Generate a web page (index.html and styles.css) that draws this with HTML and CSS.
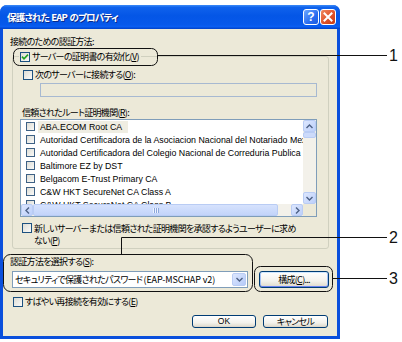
FILE: index.html
```html
<!DOCTYPE html>
<html lang="ja">
<head>
<meta charset="utf-8">
<title>保護された EAP のプロパティ</title>
<link rel="stylesheet" href="styles.css">
</head>
<body>
<div class="stage">
  <div class="window">
    <div class="titlebar">
      <span class="title">保護された EAP のプロパティ</span>
      <span class="tbtn help">?</span>
      <span class="tbtn close"><svg width="10" height="10" viewBox="0 0 10 10"><path d="M1.5 1.5 L8.5 8.5 M8.5 1.5 L1.5 8.5" stroke="#fff" stroke-width="2" stroke-linecap="square"/></svg></span>
    </div>
    <div class="client">
      <div class="label first">接続のための認証方法:</div>
      <fieldset class="group">
        <legend class="row"><span class="cb"><svg width="8" height="8" viewBox="0 0 8 8"><path d="M1 3.6 L3 5.8 L7 1.6" fill="none" stroke="#21A121" stroke-width="1.6"/></svg></span><span>サーバーの証明書の有効化(<u>V</u>)</span></legend>
        <div class="row srv"><span class="cb"></span><span>次のサーバーに接続する(<u>O</u>):</span></div>
        <div class="textbox"></div>
        <div class="label inner">信頼されたルート証明機関(<u>R</u>):</div>
        <div class="listbox">
          <div class="lb-main">
            <div class="items">
              <div class="item"><span class="cb small"></span><span class="itxt sel">ABA.ECOM Root CA</span></div>
              <div class="item"><span class="cb small"></span><span class="itxt">Autoridad Certificadora de la Asociacion Nacional del Notariado Mexicano</span></div>
              <div class="item"><span class="cb small"></span><span class="itxt">Autoridad Certificadora del Colegio Nacional de Correduria Publica</span></div>
              <div class="item"><span class="cb small"></span><span class="itxt">Baltimore EZ by DST</span></div>
              <div class="item"><span class="cb small"></span><span class="itxt">Belgacom E-Trust Primary CA</span></div>
              <div class="item"><span class="cb small"></span><span class="itxt">C&amp;W HKT SecureNet CA Class A</span></div>
              <div class="item"><span class="cb small"></span><span class="itxt">C&amp;W HKT SecureNet CA Class B</span></div>
            </div>
            <div class="vscroll">
              <div class="sbtn"><svg width="7" height="5" viewBox="0 0 7 5"><path d="M0.5 4 L3.5 1 L6.5 4" fill="none" stroke="#4D6185" stroke-width="1.4"/></svg></div>
              <div class="vthumb"></div>
              <div class="vtrack"></div>
              <div class="sbtn"><svg width="7" height="5" viewBox="0 0 7 5"><path d="M0.5 1 L3.5 4 L6.5 1" fill="none" stroke="#4D6185" stroke-width="1.4"/></svg></div>
            </div>
          </div>
          <div class="hrow">
            <div class="sbtn"><svg width="5" height="7" viewBox="0 0 5 7"><path d="M4 0.5 L1 3.5 L4 6.5" fill="none" stroke="#4D6185" stroke-width="1.4"/></svg></div>
            <div class="hthumb"><span class="grip"></span></div>
            <div class="htrack"></div>
            <div class="sbtn"><svg width="5" height="7" viewBox="0 0 5 7"><path d="M1 0.5 L4 3.5 L1 6.5" fill="none" stroke="#4D6185" stroke-width="1.4"/></svg></div>
            <div class="corner"></div>
          </div>
        </div>
        <div class="row wrap"><span class="cb"></span><span class="wraptext">新しいサーバーまたは信頼された証明機関を承認するようユーザーに求め<br>ない(<u>P</u>)</span></div>
      </fieldset>
      <div class="label method">認証方法を選択する(<u>S</u>):</div>
      <div class="method-row">
        <div class="combo">
          <span class="combo-text">セキュリティで保護されたパスワード <span class="latin">(EAP-MSCHAP v2)</span></span>
          <span class="dd"><svg width="7" height="5" viewBox="0 0 7 5"><path d="M0.5 1 L3.5 4 L6.5 1" fill="none" stroke="#4D6185" stroke-width="1.4"/></svg></span>
        </div>
        <button class="btn cfg">構成(<u>C</u>)...</button>
      </div>
      <div class="row fast"><span class="cb"></span><span>すばやい再接続を有効にする(<u>E</u>)</span></div>
      <div class="buttons">
        <button class="btn ok">OK</button>
        <button class="btn cancel">キャンセル</button>
      </div>
    </div>
  </div>
  <svg class="callouts" width="402" height="342" viewBox="0 0 402 342">
    <g fill="none" stroke="#111" stroke-width="1">
      <rect x="13.5" y="48.5" width="144" height="17" rx="6"/>
      <line x1="157.5" y1="55.5" x2="387" y2="55.5"/>
      <rect x="3.5" y="254.5" width="249" height="37" rx="7"/>
      <polyline points="121.5,254.5 121.5,237.5 387,237.5"/>
      <rect x="254.5" y="266.5" width="78" height="25" rx="6"/>
      <line x1="332.5" y1="278.5" x2="387" y2="278.5"/>
    </g>
    <g class="num">
      <text x="389" y="61">1</text>
      <text x="389" y="243">2</text>
      <text x="389" y="284">3</text>
    </g>
  </svg>
</div>
</body>
</html>
```

FILE: styles.css
```css
* { box-sizing: border-box; }
html, body { margin: 0; padding: 0; background: #fff; }
body {
  font-family: "Noto Sans CJK JP", "Liberation Sans", sans-serif;
  font-size: 9px;
  font-feature-settings: "palt";
  letter-spacing: -0.7px;
  color: #000;
}
u { text-decoration: underline; text-underline-offset: 1px; }

.stage { position: relative; width: 402px; height: 342px; padding-top: 5px; overflow: hidden; }

.window {
  width: 340px;
  height: 334px;
  display: flex;
  flex-direction: column;
  background: #0A4FDC;
  border-radius: 7px 7px 0 0;
}
.titlebar {
  height: 24px;
  display: flex;
  align-items: center;
  padding: 0 4px 0 7px;
  border-radius: 7px 7px 0 0;
  background: linear-gradient(#3C8BF7 0%, #0F62EC 10%, #0456E6 45%, #0658EA 80%, #0A5EF2 90%, #0040C8 100%);
}
.title {
  flex: 1;
  color: #fff;
  font-weight: bold;
  font-size: 9.5px;
  letter-spacing: -0.8px;
  word-spacing: 1px;
  text-shadow: 1px 1px 0 #0A2A8A;
}
.tbtn {
  width: 16px;
  height: 16px;
  margin-left: 1px;
  border: 1px solid #fff;
  border-radius: 3px;
  display: flex;
  align-items: center;
  justify-content: center;
}
.help {
  background: linear-gradient(135deg, #6EA8FF, #2A6DF0 60%, #1D5BE0);
  color: #fff;
  font: bold 12px "Liberation Sans", sans-serif;
  letter-spacing: 0;
}
.close { background: linear-gradient(135deg, #F08A62, #E0532A 55%, #C83A12); }

.client {
  flex: 1;
  margin: 0 3px 3px;
  background: #ECE9D8;
  display: flex;
  flex-direction: column;
  align-items: flex-start;
}
.label { line-height: 11px; height: 11px; white-space: nowrap; }
.label.first { margin: 7px 0 0 7px; }

.row { display: flex; align-items: center; gap: 2px; line-height: 11px; white-space: nowrap; }

.cb {
  flex: none;
  width: 10px;
  height: 10px;
  border: 1px solid #1C5180;
  background: linear-gradient(135deg, #DCDCD5, #FAFAF8);
  display: flex;
  align-items: center;
  justify-content: center;
}
.cb.small { width: 9px; height: 9px; border-color: #3E6185; }

.group {
  align-self: stretch;
  margin: 4px 8px 0 9px;
  padding: 0 11px 1px 6px;
  border: 1px solid #D0D0BF;
  border-radius: 3px;
  min-width: 0;
}
.group legend { padding: 0 2px 0 1px; height: 11px; }

.row.srv { margin: 7px 0 0 4px; }
.textbox {
  margin: 3px 0 0 21px;
  height: 14px;
  border: 1px solid #A7B9D1;
  background: #ECE9D8;
}
.label.inner { margin: 10px 0 0 3px; }

.listbox {
  margin-top: 1px;
  margin-left: 1px;
  height: 98px;
  border: 1px solid #7F9DB9;
  background: #fff;
  display: flex;
  flex-direction: column;
}
.lb-main { flex: 1; display: flex; min-height: 0; }
.items {
  flex: 1;
  overflow: hidden;
  font-family: "Liberation Sans", sans-serif;
  font-size: 8.8px;
  letter-spacing: 0;
  font-feature-settings: normal;
}
.item { height: 13px; display: flex; align-items: center; white-space: nowrap; padding-left: 5px; }
.itxt { margin-left: 3px; padding: 0 2px; line-height: 12px; }
.itxt.sel { background: #EFEDE2; padding-right: 6px; }

.vscroll { width: 13px; display: flex; flex-direction: column; background: #F3F1EA; }
.sbtn {
  flex: none;
  width: 13px;
  height: 12px;
  border: 1px solid #B9CCF4;
  border-radius: 2px;
  background: linear-gradient(135deg, #DDE7FE, #BCCFFA);
  display: flex;
  align-items: center;
  justify-content: center;
}
.vthumb { height: 6px; border: 1px solid #B9CCF4; border-radius: 2px; background: #CCDAFA; }
.vtrack { flex: 1; }

.hrow { height: 12px; display: flex; background: #F3F1EA; }
.hrow .sbtn { height: 12px; width: 12px; }
.hthumb {
  width: 245px;
  border: 1px solid #B9CCF4;
  border-radius: 2px;
  background: linear-gradient(#D6E2FD, #C3D4FA);
  display: flex;
  align-items: center;
  justify-content: center;
}
.grip { width: 6px; height: 5px; background: repeating-linear-gradient(90deg, #EEF3FF 0 1px, #8CA6DA 1px 2px); }
.htrack { flex: 1; }
.corner { width: 13px; background: #ECE9D8; }

.row.wrap { margin: 6px 0 0 3px; align-items: flex-start; }
.wraptext { line-height: 12px; }

.label.method { margin: 7px 0 0 7px; }
.method-row { display: flex; margin: 4px 0 0 9px; gap: 11px; }
.combo {
  width: 236px;
  height: 17px;
  border: 1px solid #7F9DB9;
  background: #fff;
  display: flex;
  align-items: center;
  padding: 1px 1px 1px 2px;
}
.combo-text { flex: 1; white-space: nowrap; overflow: hidden; }
.latin { letter-spacing: -0.1px; }
.dd {
  width: 14px;
  align-self: stretch;
  border: 1px solid #B9CCF4;
  border-radius: 2px;
  background: linear-gradient(135deg, #DDE7FE, #B5CAF8);
  display: flex;
  align-items: center;
  justify-content: center;
}

.btn {
  font: inherit;
  font-feature-settings: "palt";
  letter-spacing: -0.7px;
  color: #000;
  padding: 0;
  border: 1px solid #003C74;
  border-radius: 3px;
  background: linear-gradient(#FFFFFF, #F3F2EC 60%, #E3DFD3 90%, #D6D0C5);
  display: flex;
  align-items: center;
  justify-content: center;
  line-height: 11px;
}
.btn.cfg { width: 70px; height: 17px; box-shadow: inset 0 1px 0 #CEE7FF, inset 0 -1px 0 #6982EE, inset 1px 0 0 #A4C1F4, inset -1px 0 0 #A4C1F4; }

.row.fast { margin: 8px 0 0 10px; }

.buttons { align-self: stretch; display: flex; justify-content: flex-end; gap: 7px; margin: 8px 9px 0 0; }
.btn.ok { width: 64px; height: 13px; font-family: "Liberation Sans", sans-serif; font-size: 8.5px; letter-spacing: 0; }
.btn.cancel { width: 65px; height: 13px; }

.callouts { position: absolute; left: 0; top: 0; pointer-events: none; }
.num text { font-family: "Liberation Sans", sans-serif; font-size: 16px; fill: #111; letter-spacing: 0; }
```
